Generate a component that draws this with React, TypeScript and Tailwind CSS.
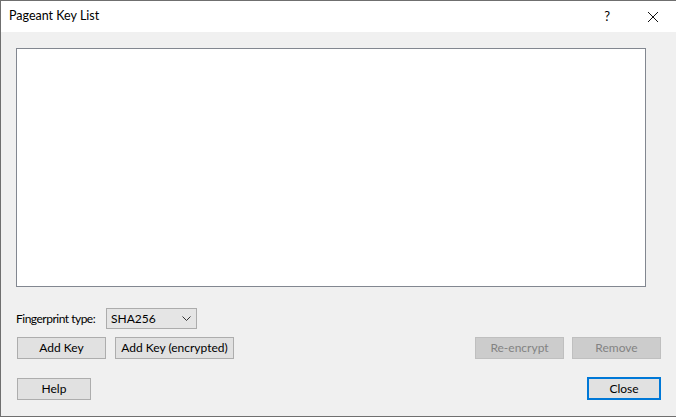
const font = { fontFamily: 'Lato, "Noto Sans", sans-serif' };

function Btn({ label, w, disabled }: { label: string; w: string; disabled?: boolean }) {
  return (
    <div
      className={`${w} h-[22px] flex items-center justify-center border text-[12px] whitespace-nowrap ${
        disabled ? "bg-[#cccccc] border-[#bfbfbf] text-[#838383]" : "bg-[#e1e1e1] border-[#adadad] text-black"
      }`}
    >
      {label}
    </div>
  );
}

export default function App() {
  return (
    <div className="w-[676px] h-[417px] flex flex-col bg-[#f0f0f0] border-l border-t border-b border-[#6f6f6f]" style={font}>
      <div className="h-[31px] bg-white flex items-center pl-[8px] shrink-0">
        <span className="text-[12.5px] text-black">Pageant Key List</span>
        <span className="ml-auto text-[13px] text-black mr-[37px]">?</span>
        <svg width="12" height="12" viewBox="0 0 12 12" className="mr-[17px]">
          <path d="M1 1L11 11M11 1L1 11" stroke="#111" strokeWidth="1" />
        </svg>
      </div>
      <div className="flex-1 flex flex-col pl-[15px] pt-[16px]">
        <div className="w-[630px] h-[239px] bg-white border border-[#828790]" />
        <div className="flex items-center mt-[21px] h-[21px]">
          <span className="text-[12px] text-black w-[90px] shrink-0 whitespace-nowrap tracking-[-0.5px]">Fingerprint type:</span>
          <div className="w-[91px] h-[21px] shrink-0 flex items-center bg-[#e5e5e5] border border-[#acacac] pl-[4px] pr-[5px]">
            <span className="text-[12px] text-black">SHA256</span>
            <svg width="9" height="6" viewBox="0 0 9 6" className="ml-auto">
              <path d="M0.5 0.5L4.5 4.5L8.5 0.5" stroke="#333" strokeWidth="1" fill="none" />
            </svg>
          </div>
        </div>
        <div className="flex items-center mt-[8px] w-[645px] pl-[1px]">
          <Btn label="Add Key" w="w-[89px]" />
          <div className="ml-[9px]">
            <Btn label="Add Key (encrypted)" w="w-[119px]" />
          </div>
          <div className="ml-auto flex gap-[8px]">
            <Btn label="Re-encrypt" w="w-[89px]" disabled />
            <Btn label="Remove" w="w-[89px]" disabled />
          </div>
        </div>
        <div className="flex items-center mt-[18px] w-[645px] pl-[1px]">
          <Btn label="Help" w="w-[74px]" />
          <div className="ml-auto w-[74px] h-[23px] flex items-center justify-center border-2 border-[#0078d7] bg-[#e1e1e1] text-[12px] text-black">
            Close
          </div>
        </div>
      </div>
    </div>
  );
}
